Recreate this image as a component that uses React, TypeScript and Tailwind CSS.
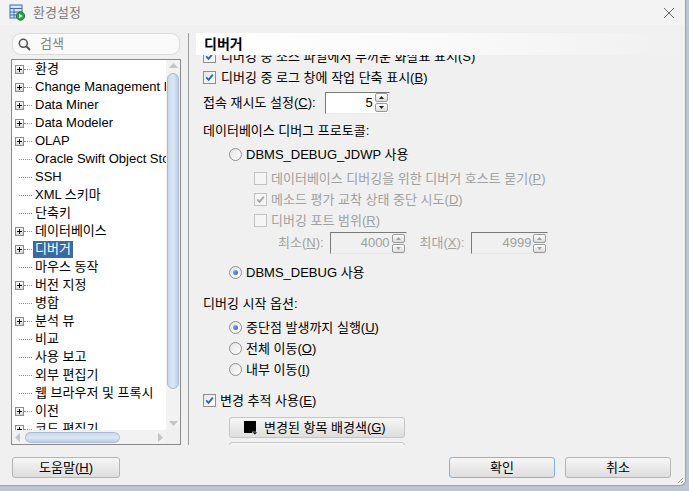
import { ReactNode } from "react";

const FONT = "font-[family-name:'Liberation_Sans','Noto_Sans_CJK_KR',sans-serif]";

const treeItems: { label: string; plus: boolean }[] = [
  { label: "환경", plus: true },
  { label: "Change Management D", plus: true },
  { label: "Data Miner", plus: true },
  { label: "Data Modeler", plus: true },
  { label: "OLAP", plus: true },
  { label: "Oracle Swift Object Storage", plus: false },
  { label: "SSH", plus: false },
  { label: "XML 스키마", plus: false },
  { label: "단축키", plus: false },
  { label: "데이터베이스", plus: true },
  { label: "디버거", plus: true },
  { label: "마우스 동작", plus: false },
  { label: "버전 지정", plus: true },
  { label: "병합", plus: false },
  { label: "분석 뷰", plus: true },
  { label: "비교", plus: false },
  { label: "사용 보고", plus: false },
  { label: "외부 편집기", plus: false },
  { label: "웹 브라우저 및 프록시", plus: false },
  { label: "이전", plus: true },
  { label: "코드 편집기", plus: true },
];

const PlusBox = () => (
  <span className="w-[9px] h-[9px] shrink-0 border border-[#8c8c8c] bg-gradient-to-b from-white to-[#d8d8d8] flex items-center justify-center relative">
    <span className="absolute w-[5px] h-px bg-black" />
    <span className="absolute w-px h-[5px] bg-black" />
  </span>
);

const Check = ({ checked, disabled }: { checked?: boolean; disabled?: boolean }) => (
  <span
    className={`w-[13px] h-[13px] shrink-0 border flex items-center justify-center ${
      disabled ? "border-[#c3c3c3] bg-[#f5f5f5]" : "border-[#8e8f8f] bg-gradient-to-br from-[#e6e6e6] to-white"
    }`}
  >
    {checked && (
      <svg width="9" height="9" viewBox="0 0 9 9">
        <path
          d="M1.2 4.4 L3.6 6.8 L7.8 1.6"
          stroke={disabled ? "#a8a8a8" : "#2b63c4"}
          strokeWidth="1.9"
          fill="none"
        />
      </svg>
    )}
  </span>
);

const Radio = ({ checked }: { checked?: boolean }) => (
  <span className="w-[13px] h-[13px] shrink-0 rounded-full border border-[#8e8f8f] bg-gradient-to-br from-[#e3e3e3] to-white flex items-center justify-center">
    {checked && <span className="w-[5px] h-[5px] rounded-full bg-gradient-to-br from-[#8fb6f0] to-[#2a5fc0]" />}
  </span>
);

const Spinner = ({ value, width, disabled }: { value: string; width: string; disabled?: boolean }) => (
  <div
    className={`flex items-center h-[22px] border border-t-[#7a7a7a] border-l-[#7a7a7a] border-r-[#e8e8e8] border-b-[#e8e8e8] ${width} ${
      disabled ? "bg-[#f0f0f0]" : "bg-white"
    }`}
  >
    <span className={`flex-1 text-right pr-[2px] ${disabled ? "text-[#a0a0a0]" : "text-black"}`}>{value}</span>
    <div className="flex flex-col w-[13px] mr-[1px] gap-px">
      <span className="h-[9px] rounded-[2px] border border-[#9a9a9a] bg-gradient-to-b from-white to-[#dcdcdc] flex items-center justify-center">
        <svg width="5" height="3" viewBox="0 0 5 3"><path d="M0 3 L2.5 0 L5 3Z" fill={disabled ? "#a0a0a0" : "#202020"} /></svg>
      </span>
      <span className="h-[9px] rounded-[2px] border border-[#9a9a9a] bg-gradient-to-b from-white to-[#dcdcdc] flex items-center justify-center">
        <svg width="5" height="3" viewBox="0 0 5 3"><path d="M0 0 L2.5 3 L5 0Z" fill={disabled ? "#a0a0a0" : "#202020"} /></svg>
      </span>
    </div>
  </div>
);

const Row = ({ className, children }: { className: string; children: ReactNode }) => (
  <div className={`flex items-center h-[21px] whitespace-nowrap ${className}`}>{children}</div>
);

const Btn = ({ children, className }: { children: ReactNode; className: string }) => (
  <button
    className={`h-[21px] rounded-[3px] border bg-gradient-to-b from-[#f6f6f6] to-[#dedede] text-[13px] text-black flex items-center justify-center whitespace-nowrap ${className}`}
  >
    {children}
  </button>
);

const TitleIcon = () => (
  <svg width="17" height="17" viewBox="0 0 17 17">
    <rect x="1" y="1" width="12" height="13" fill="#dce8f7" stroke="#3b6fc0" />
    <path d="M1 4.5 H13 M1 8 H13 M1 11 H13 M5 4.5 V14" stroke="#3b6fc0" />
    <circle cx="11.5" cy="12" r="4.2" fill="#2ea043" stroke="#1d7a30" />
    <path d="M10.2 9.8 L13.6 12 L10.2 14.2Z" fill="white" />
  </svg>
);

export default function App() {
  return (
    <div className={`w-[689px] h-[491px] bg-[#bcc6d2] overflow-hidden ${FONT}`}>
      <div className="w-[686px] h-[486px] bg-[#f0f0f0] border-r border-b border-[#a0a0a0] rounded-br-[6px] flex flex-col relative">
        {/* title bar */}
        <div className="h-[25px] bg-[#f3f3f3] flex items-center pl-[9px] pr-[10px]">
          <TitleIcon />
          <span className="ml-[7px] text-[13px] text-[#7b7b7b]">환경설정</span>
          <span className="ml-auto">
            <svg width="12" height="12" viewBox="0 0 12 12">
              <path d="M1 1 L11 11 M11 1 L1 11" stroke="#6a6a6a" strokeWidth="1" />
            </svg>
          </span>
        </div>

        <div className="flex-1 flex flex-col pt-[8px]">
          <div className="flex h-[412px]">
            {/* left column */}
            <div className="ml-[11px] w-[170px] flex flex-col">
              <div className="mx-px h-[22px] rounded-[9px] border border-[#dadada] bg-[#fafafa] flex items-center pl-[5px]">
                <svg width="13" height="13" viewBox="0 0 13 13">
                  <circle cx="5.3" cy="5.3" r="4" fill="none" stroke="#555" strokeWidth="1.6" />
                  <path d="M8.3 8.3 L12 12" stroke="#555" strokeWidth="2" />
                </svg>
                <span className="ml-[9px] text-[13px] text-[#808080]">검색</span>
              </div>
              <div className="mt-[4px] h-[386px] border border-[#8a8a8a] bg-white flex flex-col">
                <div className="flex h-[370px]">
                  <div className="flex-1 min-w-0 overflow-hidden pl-[3px]">
                    {treeItems.map((it) => (
                      <div key={it.label} className="h-[18px] flex items-center whitespace-nowrap">
                        <span className="w-[9px] shrink-0 flex justify-center">{it.plus ? <PlusBox /> : null}</span>
                        <span
                          className={`h-0 shrink-0 border-t border-dotted border-[#8a8a8a] ${it.plus ? "w-[8px]" : "w-[13px] -ml-[5px]"}`}
                        />
                        <span
                          className={`ml-[1px] shrink-0 px-[2px] h-[17px] flex items-center text-[13px] ${
                            it.label === "디버거" ? "bg-[#3b6aa3] text-white" : "text-black"
                          }`}
                        >
                          {it.label}
                        </span>
                      </div>
                    ))}
                  </div>
                  {/* vertical scrollbar */}
                  <div className="w-[14px] shrink-0 bg-[#f2f2f2] flex flex-col items-center">
                    <svg className="mt-[3px]" width="9" height="5" viewBox="0 0 9 5"><path d="M0 5 L4.5 0 L9 5Z" fill="#c4c4c4" /></svg>
                    <div className="mt-[5px] w-[12px] h-[316px] rounded-[6px] border border-[#a9bcd3] bg-gradient-to-r from-[#c9d9ec] via-[#dbe7f4] to-[#bccfe6]" />
                    <svg className="mt-auto mb-[4px]" width="9" height="5" viewBox="0 0 9 5"><path d="M0 0 L4.5 5 L9 0Z" fill="#c4c4c4" /></svg>
                  </div>
                </div>
                {/* horizontal scrollbar */}
                <div className="h-[14px] flex">
                  <div className="w-[154px] bg-[#f2f2f2] flex items-center px-[3px]">
                    <svg width="5" height="9" viewBox="0 0 5 9"><path d="M5 0 L0 4.5 L5 9Z" fill="#c4c4c4" /></svg>
                    <div className="ml-[5px] w-[95px] h-[11px] rounded-[6px] border border-[#a9bcd3] bg-gradient-to-b from-[#c9d9ec] via-[#dbe7f4] to-[#bccfe6]" />
                    <svg className="ml-auto" width="5" height="9" viewBox="0 0 5 9"><path d="M0 0 L5 4.5 L0 9Z" fill="#c4c4c4" /></svg>
                  </div>
                  <div className="flex-1 bg-[#f0f0f0]" />
                </div>
              </div>
            </div>

            {/* separator */}
            <div className="ml-[7px] w-px bg-[#9c9c9c]" />

            {/* right column */}
            <div className="ml-[7px] flex-1 min-w-0 flex flex-col text-[13px] text-black">
              <div className="h-[22px] bg-gradient-to-r from-white via-[#fafafa] to-[#f0f0f0] flex items-center pl-[8px]">
                <span className="text-[14px] font-bold">디버거</span>
              </div>
              <div className="flex-1 overflow-hidden">
                <div className="-mt-[9px] flex flex-col">
                  <Row className="pl-[7px] gap-[5px]">
                    <Check checked />
                    <span>디버깅 중 소스 파일에서 두꺼운 화살표 표시(S)</span>
                  </Row>
                  <Row className="pl-[7px] gap-[5px]">
                    <Check checked />
                    <span>
                      디버깅 중 로그 창에 작업 단축 표시(<u>B</u>)
                    </span>
                  </Row>
                  <div className="mt-[3px] h-[23px] flex items-center pl-[7px]">
                    <span>
                      접속 재시도 설정(<u>C</u>):
                    </span>
                    <div className="ml-[9px]">
                      <Spinner value="5" width="w-[65px]" />
                    </div>
                  </div>
                  <Row className="mt-[6px] pl-[7px]">
                    <span>데이터베이스 디버그 프로토콜:</span>
                  </Row>
                  <Row className="mt-[3px] pl-[33px] gap-[4px]">
                    <Radio />
                    <span>DBMS_DEBUG_JDWP 사용</span>
                  </Row>
                  <div className="mt-[3px] text-[#a0a0a0]">
                    <Row className="pl-[58px] gap-[4px]">
                      <Check disabled />
                      <span>
                        데이터베이스 디버깅을 위한 디버거 호스트 묻기(<u>P</u>)
                      </span>
                    </Row>
                    <Row className="pl-[58px] gap-[4px]">
                      <Check disabled checked />
                      <span>
                        메소드 평가 교착 상태 중단 시도(<u>D</u>)
                      </span>
                    </Row>
                    <Row className="pl-[58px] gap-[4px]">
                      <Check disabled />
                      <span>
                        디버깅 포트 범위(<u>R</u>)
                      </span>
                    </Row>
                    <div className="mt-px h-[22px] flex items-center pl-[82px]">
                      <span>
                        최소(<u>N</u>):
                      </span>
                      <div className="ml-[6px]">
                        <Spinner value="4000" width="w-[77px]" disabled />
                      </div>
                      <span className="ml-[13px]">
                        최대(<u>X</u>):
                      </span>
                      <div className="ml-[7px]">
                        <Spinner value="4999" width="w-[77px]" disabled />
                      </div>
                    </div>
                  </div>
                  <Row className="mt-[8px] pl-[33px] gap-[4px]">
                    <Radio checked />
                    <span>DBMS_DEBUG 사용</span>
                  </Row>
                  <Row className="mt-[10px] pl-[7px]">
                    <span>디버깅 시작 옵션:</span>
                  </Row>
                  <Row className="mt-[3px] pl-[33px] gap-[4px]">
                    <Radio checked />
                    <span>
                      중단점 발생까지 실행(<u>U</u>)
                    </span>
                  </Row>
                  <Row className="pl-[33px] gap-[4px]">
                    <Radio />
                    <span>
                      전체 이동(<u>O</u>)
                    </span>
                  </Row>
                  <Row className="pl-[33px] gap-[4px]">
                    <Radio />
                    <span>
                      내부 이동(<u>I</u>)
                    </span>
                  </Row>
                  <Row className="mt-[10px] pl-[7px] gap-[4px]">
                    <Check checked />
                    <span>
                      변경 추적 사용(<u>E</u>)
                    </span>
                  </Row>
                  <div className="mt-[6px] pl-[33px]">
                    <Btn className="w-[176px] border-[#c6c6c6] justify-start pl-[14px]">
                      <svg width="14" height="14" viewBox="0 0 14 14">
                        <rect x="0" y="0" width="12" height="12" fill="#000" />
                        <path d="M8 11 L13.5 11 L10.75 14Z" fill="#000" stroke="#f0f0f0" strokeWidth="0.6" />
                      </svg>
                      <span className="ml-[6px]">
                        변경된 항목 배경색(<u>G</u>)
                      </span>
                    </Btn>
                  </div>
                  <div className="mt-[4px] pl-[33px]">
                    <Btn className="w-[176px] border-[#c6c6c6] justify-start pl-[14px]">
                      <svg width="14" height="14" viewBox="0 0 14 14">
                        <rect x="0" y="0" width="12" height="12" fill="#000" />
                      </svg>
                      <span className="ml-[6px]">변경된 항목 전경색</span>
                    </Btn>
                  </div>
                </div>
              </div>
            </div>
          </div>

          {/* bottom buttons */}
          <div className="mt-[12px] flex items-center pl-[12px] pr-[14px]">
            <Btn className="w-[108px] border-[#b5b5b5]">
              도움말(<u>H</u>)
            </Btn>
            <Btn className="ml-auto w-[106px] border-[#7eb4ea]">확인</Btn>
            <Btn className="ml-[10px] w-[106px] border-[#b5b5b5]">취소</Btn>
          </div>
        </div>

        {/* resize grip */}
        <svg className="absolute right-[1px] bottom-[1px]" width="8" height="8" viewBox="0 0 8 8">
          <path d="M7 2 L2 7 M7 5 L5 7" stroke="#9a9a9a" strokeWidth="1" />
        </svg>
      </div>
    </div>
  );
}
